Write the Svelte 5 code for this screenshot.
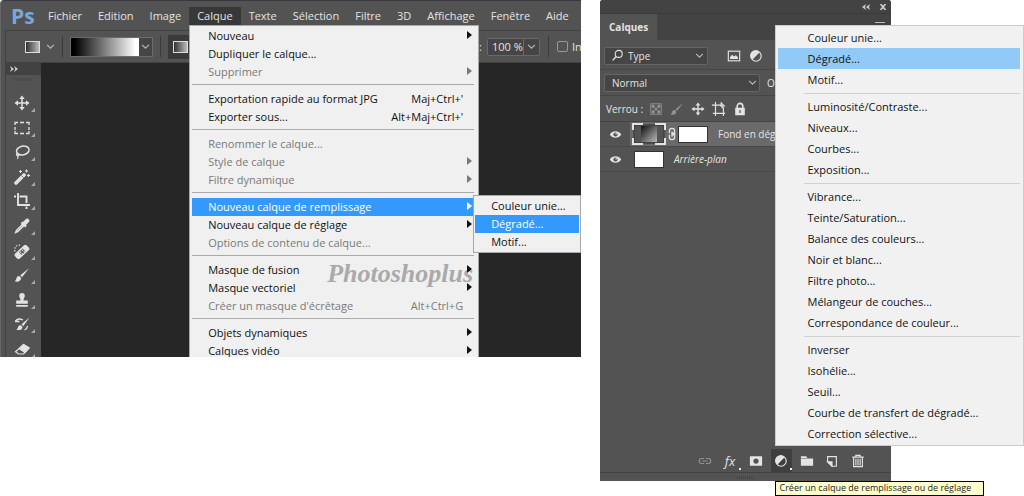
<script>
  const menus = ['Fichier', 'Edition', 'Image', 'Calque', 'Texte', 'Sélection', 'Filtre', '3D', 'Affichage', 'Fenêtre', 'Aide'];
  const layerMenu = [
    [
      { t: 'Nouveau', sub: true },
      { t: 'Dupliquer le calque...' },
      { t: 'Supprimer', sub: true, off: true },
    ],
    [
      { t: 'Exportation rapide au format JPG', key: "Maj+Ctrl+'" },
      { t: 'Exporter sous...', key: "Alt+Maj+Ctrl+'" },
    ],
    [
      { t: 'Renommer le calque...', off: true },
      { t: 'Style de calque', sub: true, off: true },
      { t: 'Filtre dynamique', sub: true, off: true },
    ],
    [
      { t: 'Nouveau calque de remplissage', sub: true, open: ['Couleur unie...', 'Dégradé...', 'Motif...'] },
      { t: 'Nouveau calque de réglage', sub: true },
      { t: 'Options de contenu de calque...', off: true },
    ],
    [
      { t: 'Masque de fusion', sub: true },
      { t: 'Masque vectoriel', sub: true },
      { t: "Créer un masque d'écrêtage", key: 'Alt+Ctrl+G', off: true },
    ],
    [
      { t: 'Objets dynamiques', sub: true },
      { t: 'Calques vidéo', sub: true },
    ],
  ];
  const adjustMenu = [
    ['Couleur unie...', 'Dégradé...', 'Motif...'],
    ['Luminosité/Contraste...', 'Niveaux...', 'Courbes...', 'Exposition...'],
    ['Vibrance...', 'Teinte/Saturation...', 'Balance des couleurs...', 'Noir et blanc...', 'Filtre photo...', 'Mélangeur de couches...', 'Correspondance de couleur...'],
    ['Inverser', 'Isohélie...', 'Seuil...', 'Courbe de transfert de dégradé...', 'Correction sélective...'],
  ];
  const tools = ['move', 'marquee', 'lasso', 'wand', 'crop', 'eyedropper', 'heal', 'brush', 'stamp', 'history', 'eraser'];
  const locks = ['checker', 'brush', 'move', 'artboard', 'lock'];
</script>

{#snippet icon(name)}
  <svg class="icon {name}" viewBox="0 0 16 16" fill="none" stroke="currentColor" stroke-width="1.3" aria-hidden="true">
    {#if name === 'move'}
      <path d="M8 3v10M3 8h10" stroke-width="1.5" />
      <path d="M8 .5 10.7 4H5.3zM8 15.500l2.700-3.500H5.300zM.5 8 4 5.300v5.400zM15.500 8 12 5.300v5.400z" fill="currentColor" stroke="none" />
    {:else if name === 'marquee'}
      <path d="M1 5V2.500h3M6 2.500h4M12 2.500h3V5M15 7v3M15 11v2.500h-3M10 13.500H6M4 13.500H1V11M1 7v3" />
    {:else if name === 'lasso'}
      <ellipse cx="8.800" cy="6.500" rx="6.300" ry="4.400" transform="rotate(-12 8.800 6.500)" stroke-width="1.500" />
      <path d="M3.500 9c-2 1-1 3 .8 2.500 1.200-.5.700-2-.8-2M3.800 11.500c.7 1.400.2 2.500-.4 3.300" />
    {:else if name === 'wand'}
      <path d="M2 14 10 6" stroke-width="3.600" stroke-linecap="round" />
      <path d="m7.500 6.500 2.200 2.200" stroke="#535353" stroke-width=".8" />
      <path d="M6.500 1v3M5 2.500h3M12.500.5v3M11 2h3M14.500 5v3M13 6.500h3" stroke-width="1.100" />
    {:else if name === 'crop'}
      <path d="M4 0v12h12M0 3.500h2M5.500 3.500h7v6.500M12.500 13.500V16" stroke-width="1.900" />
    {:else if name === 'eyedropper'}
      <path d="m8.500 6.500-6 6-.8 2 2-.8 6-6" stroke-width="1.500" />
      <path d="m7.600 4.200 4.400 4.400" stroke-width="2.200" />
      <path d="m9.500 6.500 3.700-3.700" stroke-width="4.200" stroke-linecap="round" />
    {:else if name === 'heal'}
      <rect x="0" y="5.500" width="16" height="6.800" rx="2" transform="rotate(-43 8 9)" fill="currentColor" stroke="none" />
      <path d="M5 9.200 8.700 5.500 11.500 8.400 7.800 12z" fill="#535353" stroke="none" />
      <path d="M6.600 9.200h.1M8.500 7.300h.1M8.300 10.700h.1M10.200 8.700h.1" stroke-width="1.500" stroke-linecap="round" />
      <path d="M1 8.500C-.5 4 3.500.8 7.500 2.500" stroke-dasharray="1.400 1.400" />
    {:else if name === 'brush'}
      <path d="M15 1.200 6.300 8.300 8 10.200zM5.500 9.200c-2-.5-3 1.300-3.200 2.600-.2 1.200-.8 2-1.700 2.400 3 1.100 6.300.2 6.600-3.200z" fill="currentColor" stroke="none" />
    {:else if name === 'stamp'}
      <path d="M8 1a2.900 2.900 0 0 1 2.800 3c0 1.700-1.300 2.300-1.300 4.500h4.300v3.300H2.200V8.500h4.300C6.500 6.300 5.200 5.700 5.200 4A2.900 2.900 0 0 1 8 1zM2.200 13h11.600v1.800H2.200z" fill="currentColor" stroke="none" />
    {:else if name === 'history'}
      <path d="M15.500 1.500 7.500 8.300l1.700 1.900zM6.900 9.200c-2-.3-2.800 1.100-3 2.300-.2 1-.8 1.800-1.700 2.200 3 1 6.100.2 6.300-2.800z" fill="currentColor" stroke="none" />
      <path d="M1 5.500h4.500M1.500 5C3 3 6 2.500 9 4M13.500 10c-.2 2-1.300 3.300-3 4" />
    {:else if name === 'eraser'}
      <path d="M9.500 3.500 15 7 9.500 13H4.500L1.500 10.800z" stroke-width="1.200" />
      <path d="M9.500 3.500 15 7l-4 4.500-5.500-3.700z" fill="currentColor" />
    {:else if name === 'search'}
      <circle cx="9.500" cy="6" r="4.300" /><path d="M6.400 9.300 2 14" stroke-width="1.700" />
    {:else if name === 'picture'}
      <rect x="1.500" y="2.500" width="13" height="11" /><path d="M3.500 11.500V9L6 6.500l2 2.200L10 7l2.500 2.500v2z" fill="currentColor" stroke="none" />
    {:else if name === 'adjust'}
      <circle cx="8" cy="8" r="6" /><path d="M12.200 3.800A6 6 0 1 0 3.800 12.200z" fill="currentColor" stroke="none" />
    {:else if name === 'checker'}
      <rect x="2" y="2" width="12" height="12" stroke-width="1" />
      <path d="M3 3h3.500v3.500H3zM9.500 3H13v3.500H9.500zM6.500 6.500h3v3h-3zM3 9.500h3.500V13H3zM9.500 9.500H13V13H9.500z" fill="currentColor" stroke="none" />
    {:else if name === 'artboard'}
      <path d="M4 0v16M0 3.500h11M1 13h14M13 6v10M10.500 1v3.500H14zM4.500 3.500h5l3.500 4" />
    {:else if name === 'lock'}
      <path d="M4.800 7V4.800a3.200 3.200 0 0 1 6.400 0V7" stroke-width="1.800" />
      <path d="M2.500 6.500h11v8.500h-11zM7.300 9v3.500h1.400V9z" fill="currentColor" fill-rule="evenodd" stroke="none" />
    {:else if name === 'eye'}
      <path d="M1 8c3.200-5.300 10.800-5.300 14 0-3.200 5.300-10.800 5.300-14 0z" fill="currentColor" stroke="none" />
      <circle cx="8" cy="8" r="2.600" fill="#535353" stroke="none" /><circle cx="8.800" cy="7.200" r="1" fill="currentColor" stroke="none" />
    {:else if name === 'chain'}
      <path d="M4.500 7V4a3.500 3.500 0 0 1 7 0v3h-3M4.500 9v3a3.500 3.500 0 0 0 7 0V9h-3M8 4.500v7" stroke-width="1.700" />
    {:else if name === 'link'}
      <path d="M7 10.800H4.200a2.800 2.800 0 0 1 0-5.600H7M9 5.200h2.800a2.800 2.800 0 0 1 0 5.600H9M5 8h6" />
    {:else if name === 'mask'}
      <path d="M1 2.500h14v11H1zM8 5a3 3 0 1 0 0 6 3 3 0 0 0 0-6z" fill="currentColor" fill-rule="evenodd" stroke="none" />
    {:else if name === 'folder'}
      <path d="M1 2.500h6l1.500 2H1zM1 5.200h14v8.300H1z" fill="currentColor" stroke="none" />
    {:else if name === 'new'}
      <path d="M3 9V3h10v11H8z" /><path d="M3 9h5v5z" fill="currentColor" />
    {:else if name === 'trash'}
      <path d="M1.500 3.500h13M5.500 3V1.500h5V3M3 4v10.500h10V4M5.600 5.500v7.500M8 5.500v7.500M10.400 5.500v7.500" />
    {:else if name === 'down'}
      <path d="m2 5 6 6 6-6" stroke-width="2" />
    {/if}
  </svg>
{/snippet}

<main>
  <section class="app" aria-label="Photoshop">
    <nav class="menubar">
      <span class="logo">Ps</span>
      {#each menus as m}
        <div class="entry">
          <button class="title" class:opened={m === 'Calque'}>{m}</button>
          {#if m === 'Calque'}
            <div class="menu main">
              <span class="watermark">Photoshoplus</span>
              {#each layerMenu as group}
                <ul>
                  {#each group as item}
                    <li>
                      <button class="row" class:selected={item.open} disabled={item.off}>
                        <span>{item.t}</span>
                        {#if item.key}<span class="key">{item.key}</span>{/if}
                        {#if item.sub}<svg class="arrow" viewBox="0 0 5 8" aria-hidden="true"><path d="M0 0 5 4 0 8z" fill="currentColor" /></svg>{/if}
                      </button>
                      {#if item.open}
                        <ul class="menu submenu">
                          {#each item.open as s, i}
                            <li><button class="row" class:selected={i === 1}>{s}</button></li>
                          {/each}
                        </ul>
                      {/if}
                    </li>
                  {/each}
                </ul>
              {/each}
            </div>
          {/if}
        </div>
      {/each}
    </nav>
    <div class="options">
      <div class="opts-left">
        <button class="preset" aria-label="Outil"><i class="swatch"></i>{@render icon('down')}</button>
        <i class="rule"></i>
        <button class="gradient" aria-label="Dégradé"><i></i>{@render icon('down')}</button>
        <i class="rule"></i>
        <button class="kind" aria-label="Linéaire"><i class="swatch"></i></button>
      </div>
      <div class="opts-right">
        <label for="opacity">:</label>
        <div class="percent"><input id="opacity" value="100 %" /><button aria-label="Régler">{@render icon('down')}</button></div>
        <i class="rule"></i>
        <label class="inv"><input type="checkbox" />In</label>
      </div>
    </div>
    <div class="workspace">
      <aside>
        <button class="expand" aria-label="Agrandir"><svg viewBox="0 0 8 6" aria-hidden="true"><path d="M0 0 4 3 0 6 1.300 3zM4 0 8 3 4 6 5.300 3z" fill="#d0d0d0" /></svg></button>
        <div class="grip"></div>
        <div class="tools">
          {#each tools as t}
            <button class="tool" aria-label={t}>{@render icon(t)}</button>
          {/each}
        </div>
      </aside>
      <div class="canvas"></div>
    </div>
  </section>

  <section class="panel" aria-label="Calques">
    <div class="caption">
      <button aria-label="Réduire"><svg viewBox="0 0 8 6" aria-hidden="true"><path d="M4 0 0 3l4 3-1-3zM8 0 4 3l4 3-1-3z" fill="#ccc" /></svg></button>
      <button aria-label="Fermer"><svg viewBox="0 0 8 6" aria-hidden="true"><path d="m1.500 0 5 6M6.500 0l-5 6" stroke="#ccc" stroke-width="1.700" /></svg></button>
    </div>
    <div class="tabs"><button class="tab">Calques</button><i class="burger"></i></div>
    <div class="filters">
      <div class="select type">{@render icon('search')}<select aria-label="Filtre"><option>Type</option></select>{@render icon('down')}</div>
      <button aria-label="Pixels">{@render icon('picture')}</button>
      <button aria-label="Réglages">{@render icon('adjust')}</button>
    </div>
    <div class="blend">
      <div class="select mode"><select aria-label="Mode"><option>Normal</option></select>{@render icon('down')}</div>
      <span>Op</span>
    </div>
    <div class="locks">
      <span>Verrou :</span>
      {#each locks as l}<button class:dim={l === 'checker' || l === 'brush'} aria-label={l}>{@render icon(l)}</button>{/each}
    </div>
    <div class="layer active">
      <button class="see" aria-label="Visibilité">{@render icon('eye')}</button>
      <svg class="framed" viewBox="0 0 34 22" aria-hidden="true">
        <defs><linearGradient id="fade" x1="0" y1="0" x2="1" y2="1"><stop offset="0" stop-color="#111" /><stop offset="1" stop-color="#bbb" /></linearGradient></defs>
        <rect x="2" y="2" width="30" height="18" fill="#535353" stroke="#333" />
        <rect x="9" y="3" width="16" height="16" fill="url(#fade)" />
        <path d="M1 7V1h10M23 1h10v6M33 15v6H23M11 21H1v-6" fill="none" stroke="#e2e2e2" stroke-width="2" />
      </svg>
      {@render icon('chain')}
      <span class="thumb"></span>
      <span class="name">Fond en dégradé</span>
    </div>
    <div class="layer">
      <button class="see" aria-label="Visibilité">{@render icon('eye')}</button>
      <span class="thumb"></span>
      <em class="name">Arrière-plan</em>
    </div>
    <div class="empty"></div>
    <footer>
      <div class="actions">
        <button class="dim" aria-label="Lier">{@render icon('link')}</button>
        <button class="fx dot">fx</button>
        <button aria-label="Masque">{@render icon('mask')}</button>
        <div class="adjuster">
          <button class="dot pressed" aria-label="Réglage">{@render icon('adjust')}</button>
          <div class="menu adjustments">
            {#each adjustMenu as group, g}
              <ul>
                {#each group as t, i}
                  <li><button class="row" class:hover={g === 0 && i === 1}>{t}</button></li>
                {/each}
              </ul>
            {/each}
          </div>
          <div class="tooltip" role="tooltip">Créer un calque de remplissage ou de réglage</div>
        </div>
        <button aria-label="Groupe">{@render icon('folder')}</button>
        <button aria-label="Nouveau">{@render icon('new')}</button>
        <button aria-label="Supprimer">{@render icon('trash')}</button>
      </div>
    </footer>
    <div class="bottom"><div class="grip"></div></div>
  </section>
</main>

<style>
  :global(body) { margin: 0; background: #fff; }
  main {
    display: grid;
    grid-template-columns: 581fr 19px 291fr 133fr;
    align-items: start;
    padding-bottom: 15px;
    font: 12px/18px "Open Sans", "Noto Sans", sans-serif;
    color: #e4e4e4;
  }
  * { box-sizing: border-box; }
  button, input, select { font: inherit; color: inherit; background: none; border: 0; padding: 0; margin: 0; border-radius: 0; }
  ul { list-style: none; margin: 0; padding: 0; }
  i { display: block; }
  .icon { width: 16px; height: 16px; flex: none; display: block; }
  .down { width: 9px; height: 9px; color: #b8b8b8; }

  .app { position: relative; overflow: hidden; background: #535353; border-top: 1px solid #3a3840; border-left: 1px solid #666; border-radius: 4px 0 0 0; }
  .menubar { display: flex; align-items: center; height: 29px; padding-left: 10px; font-size: 11px; }
  .logo { width: 29px; font: bold 21px/28px "Open Sans", sans-serif; color: #7aa7d9; }
  .entry { position: relative; }
  .title { display: block; height: 18px; padding: 0 8px; white-space: nowrap; }
  .opened { background: #383838; }

  .menu { position: absolute; z-index: 2; background: #f0f0f0; color: #111; border: 1px solid #a8a8a8; }
  .main { top: 18px; left: 0; width: 290px; padding: 1px 4px 0 2px; font-size: 11px; }
  .main > ul + ul::before, .adjustments ul + ul::before { content: ""; display: block; height: 1px; background: #aaa; }
  .main > ul + ul::before { margin: 3px 0 5px; }
  .main li { position: relative; }
  .row { position: relative; display: flex; align-items: center; width: 100%; height: 18px; padding-left: 16px; text-align: left; white-space: nowrap; }
  .row:disabled { color: #7a7a7a; }
  .key { margin-left: auto; padding-right: 11px; }
  .arrow { width: 5px; height: 8px; margin: 0 2px 2px auto; }
  .selected { background: #3399fd; color: #fff; }
  .submenu { left: calc(100% - 1px); top: -3px; width: 108px; padding: 1px; }
  .watermark { position: absolute; right: 5px; bottom: 72px; font: italic bold 26px/28px "Brush Script MT", "Liberation Serif", serif; color: #aaa; }

  .options { display: flex; justify-content: space-between; height: 33px; margin-left: 4px; border: 1px solid #424242; border-right: 0; }
  .opts-left, .opts-right { display: flex; align-items: center; gap: 7px; }
  .opts-left { padding-left: 19px; }
  .rule { width: 1px; height: 21px; background: #3b3b3b; }
  .swatch { width: 15px; height: 12px; border: 1px solid #ddd; background: linear-gradient(90deg, #333, #bbb); }
  .preset { display: flex; align-items: center; gap: 6px; }
  .gradient { display: flex; align-items: center; height: 20px; padding-right: 2px; gap: 2px; border: 1px solid #6a6a6a; background: #454545; }
  .gradient i { width: 68px; height: 18px; background: linear-gradient(90deg, #000 5%, #fff 95%); }
  .kind { display: flex; align-items: center; padding-left: 5px; width: 24px; height: 24px; background: #3a3a3a; }
  .opts-right { font-size: 11px; gap: 5px; }
  .percent { display: flex; align-items: center; height: 18px; border: 1px solid #696969; border-radius: 2px; background: #454545; }
  .percent input { width: 36px; padding-left: 4px; height: 16px; border-right: 1px solid #696969; }
  .percent button { padding: 0 3px; }
  .opts-right .rule { margin-left: 3px; margin-right: 3px; }
  .inv { display: flex; align-items: center; gap: 4px; width: 24px; overflow: hidden; }
  .inv input { appearance: none; flex: none; width: 11px; height: 11px; border: 1px solid #999; border-radius: 2px; }

  .workspace { display: flex; }
  aside { width: 36px; margin-left: 4px; background: #535353; border-left: 1px solid #424242; }
  .expand { display: flex; align-items: center; width: 100%; height: 12px; padding-left: 4px; background: #424242; }
  .expand svg, .caption svg { width: 8px; height: 6px; }
  .grip { width: 18px; height: 3px; margin: 3px 8px; background: repeating-linear-gradient(90deg, #444 0 1px, #535353 1px 2px); }
  .tools { display: flex; flex-direction: column; justify-content: space-between; height: 262px; padding-left: 8px; margin-top: 14px; }
  .tool { position: relative; width: 22px; height: 16px; color: #e2e2e2; }
  .tool::after { content: ""; position: absolute; right: 1px; bottom: -1px; border: 2px solid transparent; border-right-color: #aaa; border-bottom-color: #aaa; }
  .canvas { flex: 1; background: #262626; }

  .panel { grid-column: 3; min-width: 0; background: #535353; border-radius: 3px 3px 0 0; font-size: 10px; }
  .caption { display: flex; justify-content: flex-end; align-items: center; gap: 9px; height: 14px; padding-right: 4px; background: #434343; border-bottom: 1px solid #3a3a3a; border-radius: 3px 3px 0 0; }
  .caption button { display: flex; }
  .tabs { display: flex; justify-content: space-between; height: 26px; background: #434343; }
  .tab { padding: 0 9px; background: #535353; font-weight: bold; }
  .burger { width: 10px; height: 6px; margin: 8px 6px; border-top: 1px solid #bbb; }
  .filters { display: flex; align-items: center; height: 30px; gap: 8px; padding: 2px 0 0 4px; border-bottom: 1px solid #454545; }
  .filters .picture, .filters .adjust { width: 14px; height: 14px; }
  .select { display: flex; align-items: center; height: 18px; background: #454545; border: 1px solid #656565; border-radius: 2px; }
  .select select { appearance: none; flex: 1; min-width: 0; outline: 0; }
  .type { width: 104px; margin-right: 11px; padding: 0 3px 0 6px; gap: 4px; }
  .type .search { width: 13px; height: 13px; }
  .blend { display: flex; align-items: center; height: 26px; padding-left: 4px; gap: 7px; border-bottom: 1px solid #454545; }
  .mode { width: 156px; padding: 0 2px 0 7px; }
  .locks { display: flex; align-items: center; height: 26px; gap: 7px; padding-left: 6px; border-bottom: 1px solid #454545; }
  .locks span { width: 36px; white-space: nowrap; }
  .locks .icon { width: 14px; height: 14px; }
  .dim { color: #929292; }
  .layer { display: flex; align-items: center; height: 25px; padding-left: 9px; border-bottom: 1px solid #484848; white-space: nowrap; overflow: hidden; }
  .active { background: linear-gradient(90deg, #535353 0 30px, #6a6a6a 30px); }
  .see .icon { width: 13px; height: 13px; }
  .see { width: 13px; margin-right: 12px; }
  .thumb { flex: none; width: 30px; height: 17px; background: #fff; border: 1px solid #333; }
  .framed { flex: none; width: 34px; height: 22px; margin-left: -2px; }
  .layer .chain { width: 12px; height: 14px; }
  .name { margin-left: 10px; }
  .empty { height: 277px; }
  footer { display: flex; justify-content: flex-end; height: 23px; padding-right: 23px; }
  .actions { display: flex; justify-content: space-between; align-items: center; width: 174px; }
  .actions button { position: relative; display: flex; align-items: center; justify-content: center; width: 21px; height: 23px; }
  .actions .icon { width: 14px; height: 14px; }
  .actions .fx { font: italic 13px/18px "Open Sans", sans-serif; }
  .dot::after { content: ""; position: absolute; right: 0; bottom: 2px; width: 2px; height: 2px; background: #eee; }
  .pressed { background: #3f3f3f; }
  .adjuster { position: relative; }
  .adjustments { left: 4px; bottom: calc(100% + 3px); width: 249px; padding: 1px 3px 1px 2px; font-size: 11px; border-color: #ccc; background: #f1f1f1; }
  .menu.adjustments .row { height: 21px; width: 100%; padding-left: 30px; justify-content: flex-start; }
  .adjustments ul + ul::before { margin: 3px 0 2px 26px; background: #d0d0d0; }
  .adjustments .hover { background: #91c9f7; }
  .tooltip { position: absolute; z-index: 3; top: calc(100% + 9px); left: 4px; width: 209px; height: 15px; padding-left: 4px; border: 1px solid #000; background: #ffffcb; color: #222; line-height: 12px; font-size: 9px; white-space: nowrap; }
  .bottom { height: 9px; border-top: 1px solid #424242; }
  .bottom .grip { margin: 3px auto; }
</style>
